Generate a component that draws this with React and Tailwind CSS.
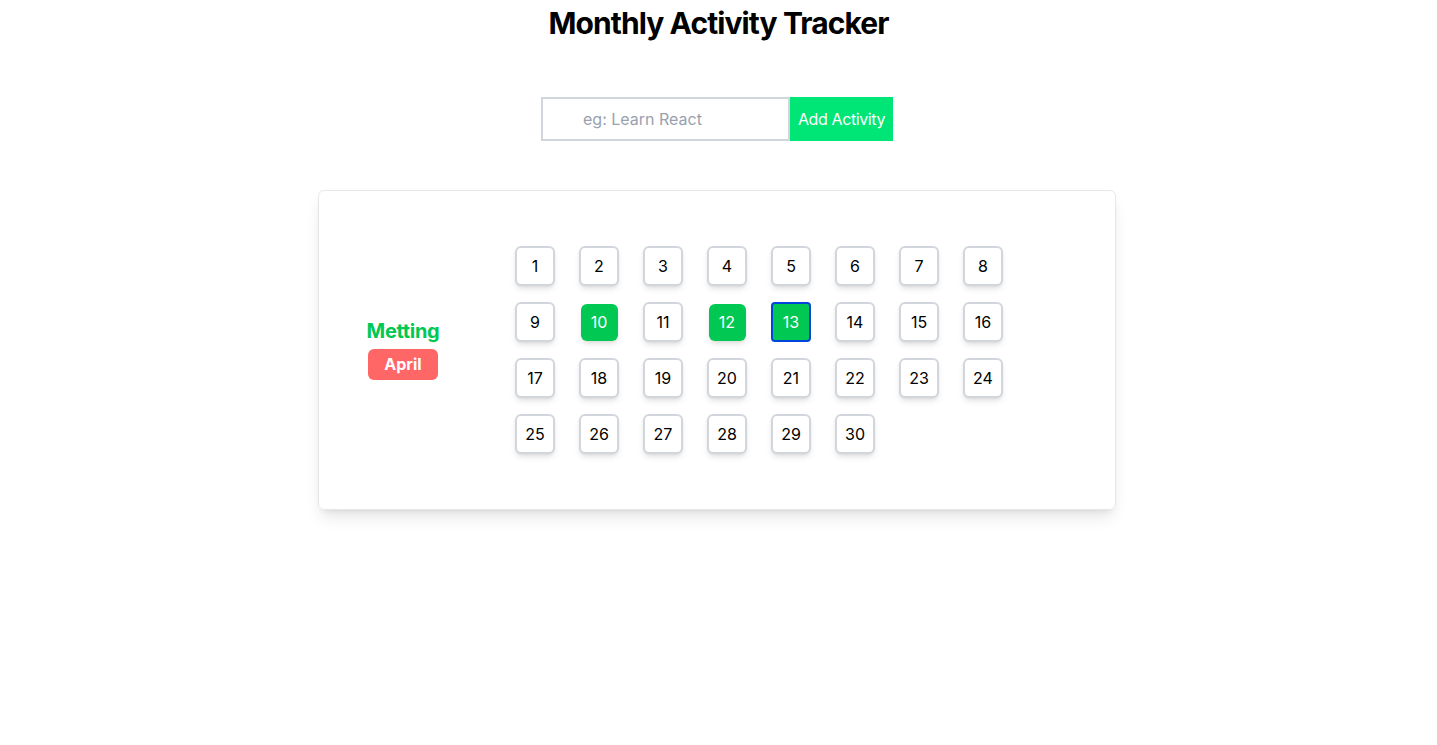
import React, { useState } from "react";

const DAYS = Array.from({ length: 30 }, (_, i) => i + 1);

export default function App() {
  const [done] = useState([10, 12, 13]);
  const [focused] = useState(13);

  return (
    <div className="min-h-screen bg-white flex flex-col items-center font-['Inter','Liberation_Sans',sans-serif] text-black">
      <h1 className="mt-[5px] text-[30px] leading-[36px] font-bold tracking-[-0.9px]">Monthly Activity Tracker</h1>

      {/* Add activity form */}
      <div className="mt-[56px] flex mr-[3px]">
        <input
          type="text"
          placeholder="eg: Learn React"
          className="w-[249px] h-[44px] border-2 border-gray-300 pl-10 pr-3 text-base outline-none placeholder:text-gray-400"
        />
        <button className="h-[44px] px-2 bg-[#00e676] text-white text-base tracking-[-0.4px]">Add Activity</button>
      </div>

      {/* Activity card */}
      <div className="mt-[49px] w-[798px] h-[320px] mr-[3px] rounded-md border border-gray-200 shadow-lg flex items-center pl-[48px]">
        <div className="w-[72px] flex flex-col items-center gap-[8px]">
          <span className="text-[20px] leading-5 font-bold tracking-[-0.3px] text-[#00c853]">Metting</span>
          <span className="px-4 h-[31px] flex items-center rounded-md bg-[#ff6666] text-white font-bold text-base">April</span>
        </div>

        <div className="ml-[76px] grid grid-cols-8 gap-x-6 gap-y-4">
          {DAYS.map((d) => {
            const isDone = done.includes(d);
            const isFocused = focused === d;
            if (isFocused) {
              return (
                <div key={d} className="w-10 h-10 flex items-center justify-center rounded-[4px] border-2 border-[#0044dd] bg-[#00c853] text-white text-base">
                  {d}
                </div>
              );
            }
            if (isDone) {
              return (
                <div key={d} className="w-10 h-10 flex items-center justify-center">
                  <div className="w-[37px] h-[37px] flex items-center justify-center rounded-md bg-[#00c853] text-white text-base shadow-md">
                    {d}
                  </div>
                </div>
              );
            }
            return (
              <div key={d} className="w-10 h-10 flex items-center justify-center rounded-md border-2 border-gray-300 bg-white text-base shadow-md">
                {d}
              </div>
            );
          })}
        </div>
      </div>
    </div>
  );
}
